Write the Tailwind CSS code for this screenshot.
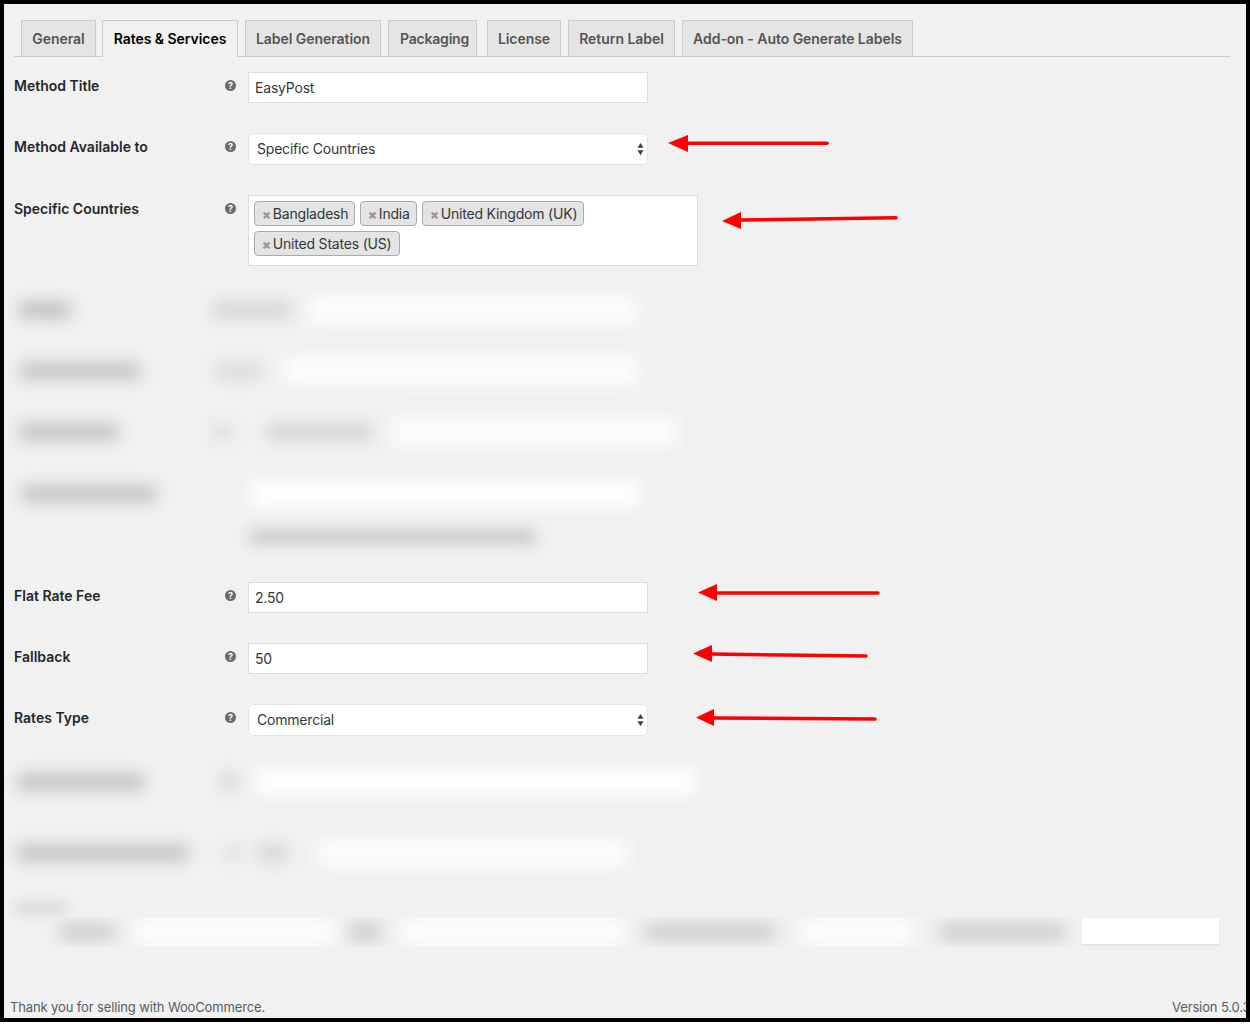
<!DOCTYPE html>
<html lang="en">
<head>
    <meta charset="UTF-8">
    <meta name="viewport" content="width=device-width, initial-scale=1.0">
    <title>EasyPost - Rates &amp; Services</title>
    <script src="https://cdn.jsdelivr.net/npm/@tailwindcss/browser@4"></script>
</head>
<body class="bg-white font-['Inter','Liberation_Sans',sans-serif] text-[14px] leading-[20px] text-[#23282d]">

    <div class="relative w-[1250px] h-[1022px] border-4 border-black bg-[#f1f1f1] overflow-hidden flex flex-col pl-[10px] pt-[16px]">

        <!-- tabs -->
        <nav class="flex items-end h-[37px] w-[1216px] border-b border-[#cccccc] pl-[7px] font-semibold text-[#555555] tracking-[-0.05px]">
            <a class="h-[36px] w-[75px] flex items-center justify-center border border-b-0 border-[#cccccc] bg-[#e5e5e5]">General</a>
            <a class="h-[37px] w-[136px] ml-[6px] pb-[1px] flex items-center justify-center border border-b-0 border-[#cccccc] bg-[#f1f1f1] text-[#000000] -mb-px">Rates &amp; Services</a>
            <a class="h-[36px] w-[136px] ml-[7px] flex items-center justify-center border border-b-0 border-[#cccccc] bg-[#e5e5e5]">Label Generation</a>
            <a class="h-[36px] w-[89px] ml-[7px] pl-[4px] tracking-[-0.2px] flex items-center justify-center border border-b-0 border-[#cccccc] bg-[#e5e5e5]">Packaging</a>
            <a class="h-[36px] w-[74px] ml-[10px] flex items-center justify-center border border-b-0 border-[#cccccc] bg-[#e5e5e5]">License</a>
            <a class="h-[36px] w-[107px] ml-[7px] flex items-center justify-center border border-b-0 border-[#cccccc] bg-[#e5e5e5]">Return Label</a>
            <a class="h-[36px] w-[231px] ml-[7px] flex items-center justify-center border border-b-0 border-[#cccccc] bg-[#e5e5e5]">Add-on - Auto Generate Labels</a>
        </nav>

        <!-- method title -->
        <div class="flex items-start mt-[15px]">
            <label class="w-[211px] mt-[4px] font-semibold">Method Title</label>
            <span class="w-[11px] h-[11px] mt-[8px] rounded-full bg-[#6b6b6b] text-white text-[9px] leading-[11px] font-bold text-center">?</span>
            <input type="text" value="EasyPost" class="ml-[12px] w-[400px] h-[31px] px-[6px] bg-white border border-[#dddddd] text-[#32373c] tracking-[-0.2px] outline-none">
        </div>

        <!-- method available to -->
        <div class="flex items-start mt-[30px]">
            <label class="w-[211px] mt-[4px] font-semibold">Method Available to</label>
            <span class="w-[11px] h-[11px] mt-[8px] rounded-full bg-[#6b6b6b] text-white text-[9px] leading-[11px] font-bold text-center">?</span>
            <div class="relative ml-[12px] w-[400px] h-[32px]">
                <select class="appearance-none w-full h-full pl-[8px] bg-white border border-[#e4e4e4] rounded-[5px] text-[#32373c] tracking-[-0.2px] outline-none">
                    <option>Specific Countries</option>
                </select>
                <svg class="absolute right-[4px] top-[9px] w-[7px] h-[14px]" viewBox="0 0 8 14"><path d="M4 0 7.500 5.500H.5z M.5 8.500h7L4 14z" fill="#3c4248"/></svg>
            </div>
        </div>

        <!-- specific countries -->
        <div class="flex items-start mt-[30px]">
            <label class="w-[211px] mt-[4px] font-semibold">Specific Countries</label>
            <span class="w-[11px] h-[11px] mt-[8px] rounded-full bg-[#6b6b6b] text-white text-[9px] leading-[11px] font-bold text-center">?</span>
            <div class="ml-[12px] w-[450px] h-[71px] pl-[5px] pt-[5px] bg-white border border-[#dddddd] text-[#32373c] tracking-[-0.2px]">
                <div class="flex gap-[5px]">
                    <span class="h-[25px] w-[101px] flex items-center pl-[7px] bg-[#e4e4e4] border border-[#aaaaaa] rounded-[4px]"><b class="text-[#999999] text-[13px] font-black mr-[2px]">×</b>Bangladesh</span>
                    <span class="h-[25px] w-[57px] flex items-center pl-[7px] bg-[#e4e4e4] border border-[#aaaaaa] rounded-[4px]"><b class="text-[#999999] text-[13px] font-black mr-[2px]">×</b>India</span>
                    <span class="h-[25px] w-[162px] flex items-center pl-[7px] bg-[#e4e4e4] border border-[#aaaaaa] rounded-[4px] whitespace-nowrap"><b class="text-[#999999] text-[13px] font-black mr-[2px]">×</b>United Kingdom (UK)</span>
                </div>
                <span class="mt-[5px] h-[25px] w-[146px] flex items-center pl-[7px] bg-[#e4e4e4] border border-[#aaaaaa] rounded-[4px] whitespace-nowrap"><b class="text-[#999999] text-[13px] font-black mr-[2px]">×</b>United States (US)</span>
            </div>
        </div>

        <!-- blurred rows -->
        <div class="flex items-center h-[30px] mt-[29px] blur-[8px]">
            <i class="ml-[6px] w-[50px] h-[16px] bg-[#bdbdbd]"></i>
            <i class="ml-[143px] w-[78px] h-[16px] bg-[#d4d4d4]"></i>
            <i class="ml-[17px] w-[330px] h-[30px] bg-[#fbfbfb]"></i>
        </div>
        <div class="flex items-center h-[30px] mt-[31px] blur-[8px]">
            <i class="ml-[6px] w-[120px] h-[16px] bg-[#c0c0c0]"></i>
            <i class="ml-[75px] w-[46px] h-[16px] bg-[#dadada]"></i>
            <i class="ml-[22px] w-[355px] h-[30px] bg-[#fbfbfb]"></i>
        </div>
        <div class="flex items-center h-[30px] mt-[31px] blur-[8px]">
            <i class="ml-[6px] w-[98px] h-[16px] bg-[#c0c0c0]"></i>
            <i class="ml-[97px] w-[16px] h-[16px] bg-[#dadada]"></i>
            <i class="ml-[36px] w-[105px] h-[14px] bg-[#d0d0d0]"></i>
            <i class="ml-[19px] w-[285px] h-[30px] bg-[#fbfbfb]"></i>
        </div>
        <div class="flex items-center h-[30px] mt-[32px] blur-[8px]">
            <i class="ml-[8px] w-[134px] h-[16px] bg-[#c0c0c0]"></i>
            <i class="ml-[94px] w-[390px] h-[30px] bg-[#fdfdfd]"></i>
        </div>
        <div class="flex items-center h-[14px] mt-[21px] blur-[7px]">
            <i class="ml-[236px] w-[285px] h-[14px] bg-[#c8c8c8]"></i>
        </div>

        <!-- flat rate fee -->
        <div class="flex items-start mt-[38px]">
            <label class="w-[211px] mt-[4px] font-semibold">Flat Rate Fee</label>
            <span class="w-[11px] h-[11px] mt-[8px] rounded-full bg-[#6b6b6b] text-white text-[9px] leading-[11px] font-bold text-center">?</span>
            <input type="text" value="2.50" class="ml-[12px] w-[400px] h-[31px] px-[6px] bg-white border border-[#dddddd] text-[#32373c] tracking-[-0.2px] outline-none">
        </div>

        <!-- fallback -->
        <div class="flex items-start mt-[30px]">
            <label class="w-[211px] mt-[4px] font-semibold">Fallback</label>
            <span class="w-[11px] h-[11px] mt-[8px] rounded-full bg-[#6b6b6b] text-white text-[9px] leading-[11px] font-bold text-center">?</span>
            <input type="text" value="50" class="ml-[12px] w-[400px] h-[31px] px-[6px] bg-white border border-[#dddddd] text-[#32373c] tracking-[-0.2px] outline-none">
        </div>

        <!-- rates type -->
        <div class="flex items-start mt-[30px]">
            <label class="w-[211px] mt-[4px] font-semibold">Rates Type</label>
            <span class="w-[11px] h-[11px] mt-[8px] rounded-full bg-[#6b6b6b] text-white text-[9px] leading-[11px] font-bold text-center">?</span>
            <div class="relative ml-[12px] w-[400px] h-[32px]">
                <select class="appearance-none w-full h-full pl-[8px] bg-white border border-[#e4e4e4] rounded-[5px] text-[#32373c] tracking-[-0.2px] outline-none">
                    <option>Commercial</option>
                </select>
                <svg class="absolute right-[4px] top-[9px] w-[7px] h-[14px]" viewBox="0 0 8 14"><path d="M4 0 7.500 5.500H.5z M.5 8.500h7L4 14z" fill="#3c4248"/></svg>
            </div>
        </div>

        <!-- blurred rows -->
        <div class="flex items-center h-[30px] mt-[31px] blur-[8px]">
            <i class="ml-[4px] w-[126px] h-[16px] bg-[#c0c0c0]"></i>
            <i class="ml-[78px] w-[14px] h-[18px] bg-[#d4d4d4]"></i>
            <i class="ml-[20px] w-[440px] h-[30px] bg-[#fdfdfd]"></i>
        </div>
        <div class="flex items-center h-[30px] mt-[41px] blur-[8px]">
            <i class="ml-[4px] w-[170px] h-[16px] bg-[#c0c0c0]"></i>
            <i class="ml-[38px] w-[14px] h-[16px] bg-[#dedede]"></i>
            <i class="ml-[18px] w-[30px] h-[16px] bg-[#d4d4d4]"></i>
            <i class="ml-[30px] w-[310px] h-[30px] bg-[#fbfbfb]"></i>
        </div>

        <!-- blurred label -->
        <div class="h-[10px] mt-[35px] blur-[6px]"><i class="block ml-[2px] w-[50px] h-[10px] bg-[#d4d4d4]"></i></div>

        <!-- last row, the right hand box is not blurred -->
        <div class="flex items-start mt-[4px] h-[30px]">
            <div class="w-[1067px] h-[30px] overflow-hidden">
                <div class="flex items-center h-[30px] blur-[8px]">
                    <i class="shrink-0 ml-[46px] w-[55px] h-[14px] bg-[#c8c8c8]"></i>
                    <i class="shrink-0 ml-[20px] w-[200px] h-[30px] bg-[#fbfbfb]"></i>
                    <i class="shrink-0 ml-[15px] w-[30px] h-[16px] bg-[#c8c8c8]"></i>
                    <i class="shrink-0 ml-[20px] w-[225px] h-[30px] bg-[#fbfbfb]"></i>
                    <i class="shrink-0 ml-[20px] w-[130px] h-[14px] bg-[#c8c8c8]"></i>
                    <i class="shrink-0 ml-[25px] w-[115px] h-[30px] bg-[#fbfbfb]"></i>
                    <i class="shrink-0 ml-[25px] w-[125px] h-[14px] bg-[#c8c8c8]"></i>
                </div>
            </div>
            <div class="w-[139px] h-[29px] bg-white border border-[#eeeeee] border-b-[2px] border-b-[#e4e4e4]"></div>
        </div>

        <!-- footer -->
        <footer class="mt-auto mb-[1px] -ml-[4px] flex items-center h-[20px] text-[13px] text-[#555d66] tracking-[-0.13px] whitespace-nowrap">
            <span>Thank you for selling with WooCommerce.</span>
            <span class="ml-auto -mr-[4px] w-[78px]">Version 5.0.3</span>
        </footer>
    </div>

    <!-- red annotation arrows -->
    <svg class="absolute left-0 top-0 w-[1250px] h-[1026px] pointer-events-none" viewBox="0 0 1250 1026">
        <g stroke="#fe0000" stroke-width="3.5" stroke-linecap="round" fill="none">
            <path d="M686 143.200H827"/>
            <path d="M739 220 896 217.800"/>
            <path d="M715 593H878"/>
            <path d="M710 654 866 656"/>
            <path d="M712 718 875 719"/>
        </g>
        <g fill="#fe0000">
            <path d="M668 143 688 135V152z"/>
            <path d="M722 221 741 212V229z"/>
            <path d="M698 592.500 717 584V601z"/>
            <path d="M693 653.500 712 645V662z"/>
            <path d="M696 717.500 714 709V726z"/>
        </g>
    </svg>

</body>
</html>
